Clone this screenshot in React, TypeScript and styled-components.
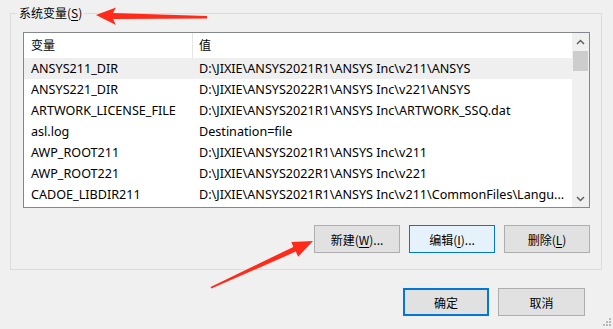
import React from "react";
import styled, { createGlobalStyle } from "styled-components";

const GlobalStyle = createGlobalStyle`
  html, body { margin: 0; padding: 0; background: #f0f0f0; }
  body {
    width: 613px; height: 329px; overflow: hidden;
    font-family: "Noto Sans", "Noto Sans CJK SC", sans-serif;
    font-size: 12px; color: #000;
  }
  * { box-sizing: border-box; }
`;

const Page = styled.div`
  position: relative;
  width: 613px;
  height: 329px;
  padding: 5px 11px 0 10px;
  display: flex;
  flex-direction: column;
`;

const Group = styled.fieldset`
  margin: 0;
  width: 592px;
  border: 1px solid #dcdcdc;
  padding: 11px 11px 16px 12px;
  display: flex;
  flex-direction: column;
`;

const Legend = styled.legend`
  font-family: "Noto Sans CJK SC", sans-serif;
  font-size: 12px;
  line-height: 16px;
  padding: 0 2px;
  margin-left: -6px;
`;

const Key = styled.span`
  text-decoration: underline;
  text-underline-offset: 2px;
`;

const ListBox = styled.div`
  height: 176px;
  border: 1px solid #828790;
  background: #fff;
  display: flex;
`;

const ListMain = styled.div`
  flex: 1;
  display: flex;
  flex-direction: column;
  min-width: 0;
`;

const HeaderRow = styled.div`
  height: 25px;
  display: grid;
  grid-template-columns: 169px 1fr;
`;

const HeaderCell = styled.div<{ $divider?: boolean }>`
  font-family: "Noto Sans CJK SC", sans-serif;
  line-height: 24px;
  padding-left: ${(p) => (p.$divider ? "7px" : "6px")};
  border-right: ${(p) => (p.$divider ? "1px solid #e5e5e5" : "none")};
`;

const Row = styled.div<{ $active?: boolean }>`
  height: 21px;
  display: grid;
  grid-template-columns: 169px 1fr;
  background: ${(p) => (p.$active ? "#efefef" : "transparent")};
  font-size: 12.6px;
  line-height: 21px;
  white-space: nowrap;
`;

const Cell = styled.div<{ $first?: boolean }>`
  padding-left: ${(p) => (p.$first ? "7px" : "6px")};
  overflow: hidden;
`;

const ScrollBar = styled.div`
  width: 17px;
  background: #f0f0f0;
  display: flex;
  flex-direction: column;
`;

const ScrollArrow = styled.div`
  height: 17px;
  display: flex;
  align-items: center;
  justify-content: center;
`;

const Track = styled.div`
  flex: 1;
  padding: 1px 1px 0 1px;
`;

const Thumb = styled.div`
  height: 20px;
  background: #cdcdcd;
`;

const ButtonRow = styled.div<{ $pad?: number; $top: number }>`
  display: flex;
  justify-content: flex-end;
  gap: 9px;
  margin-top: ${(p) => p.$top}px;
  padding-right: ${(p) => p.$pad ?? 0}px;
`;

const Button = styled.button<{ $focus?: boolean; $default?: boolean; $w?: number }>`
  width: ${(p) => p.$w ?? 86}px;
  height: 28px;
  margin: 0;
  padding: 0;
  font-family: "Noto Sans CJK SC", sans-serif;
  font-size: 12px;
  color: #000;
  background: ${(p) => (p.$focus ? "#e5f1fb" : "#e1e1e1")};
  border: ${(p) =>
    p.$default ? "2px solid #0078d7" : p.$focus ? "1px solid #0078d7" : "1px solid #adadad"};
`;

const Overlay = styled.svg`
  position: absolute;
  left: 0;
  top: 0;
  pointer-events: none;
`;

const rows: [string, string][] = [
  ["ANSYS211_DIR", "D:\\JIXIE\\ANSYS2021R1\\ANSYS Inc\\v211\\ANSYS"],
  ["ANSYS221_DIR", "D:\\JIXIE\\ANSYS2022R1\\ANSYS Inc\\v221\\ANSYS"],
  ["ARTWORK_LICENSE_FILE", "D:\\JIXIE\\ANSYS2021R1\\ANSYS Inc\\ARTWORK_SSQ.dat"],
  ["asl.log", "Destination=file"],
  ["AWP_ROOT211", "D:\\JIXIE\\ANSYS2021R1\\ANSYS Inc\\v211"],
  ["AWP_ROOT221", "D:\\JIXIE\\ANSYS2022R1\\ANSYS Inc\\v221"],
  ["CADOE_LIBDIR211", "D:\\JIXIE\\ANSYS2021R1\\ANSYS Inc\\v211\\CommonFiles\\Langu..."],
];

const Chevron = ({ up }: { up?: boolean }) => (
  <svg width="9" height="6" viewBox="0 0 9 6">
    <polyline
      points={up ? "1,5 4.5,1.5 8,5" : "1,1 4.5,4.5 8,1"}
      fill="none"
      stroke="#606060"
      strokeWidth="1.5"
    />
  </svg>
);

export default function App() {
  return (
    <>
      <GlobalStyle />
      <Page>
        <Group>
          <Legend>
            系统变量(<Key>S</Key>)
          </Legend>
          <ListBox>
            <ListMain>
              <HeaderRow>
                <HeaderCell $divider>变量</HeaderCell>
                <HeaderCell>值</HeaderCell>
              </HeaderRow>
              {rows.map(([k, v], i) => (
                <Row key={k} $active={i === 0}>
                  <Cell $first>{k}</Cell>
                  <Cell>{v}</Cell>
                </Row>
              ))}
            </ListMain>
            <ScrollBar>
              <ScrollArrow>
                <Chevron up />
              </ScrollArrow>
              <Track>
                <Thumb />
              </Track>
              <ScrollArrow>
                <Chevron />
              </ScrollArrow>
            </ScrollBar>
          </ListBox>
          <ButtonRow $top={17}>
            <Button>
              新建(<Key>W</Key>)...
            </Button>
            <Button $focus>
              编辑(<Key>I</Key>)...
            </Button>
            <Button $w={86}>
              删除(<Key>L</Key>)
            </Button>
          </ButtonRow>
        </Group>
        <ButtonRow $top={18} $pad={17}>
          <Button $default>确定</Button>
          <Button $w={87}>取消</Button>
        </ButtonRow>
        <Overlay width="613" height="329" viewBox="0 0 613 329">
          <polygon
            points="96,15 116,7.5 113,13 207,16 207,18.5 113,19 116,25"
            fill="#ff2a1a"
          />
          <polygon
            points="313,241 298.2,256.7 295.8,251.6 211.4,288.6 210.6,287.1 293.3,246.9 291.4,242.1"
            fill="#ff2a1a"
          />
          <g fill="#b8b8b8">
            <rect x="609" y="318" width="2" height="2" />
            <rect x="606" y="321" width="2" height="2" />
            <rect x="609" y="321" width="2" height="2" />
            <rect x="603" y="324" width="2" height="2" />
            <rect x="606" y="324" width="2" height="2" />
            <rect x="609" y="324" width="2" height="2" />
          </g>
        </Overlay>
      </Page>
    </>
  );
}
